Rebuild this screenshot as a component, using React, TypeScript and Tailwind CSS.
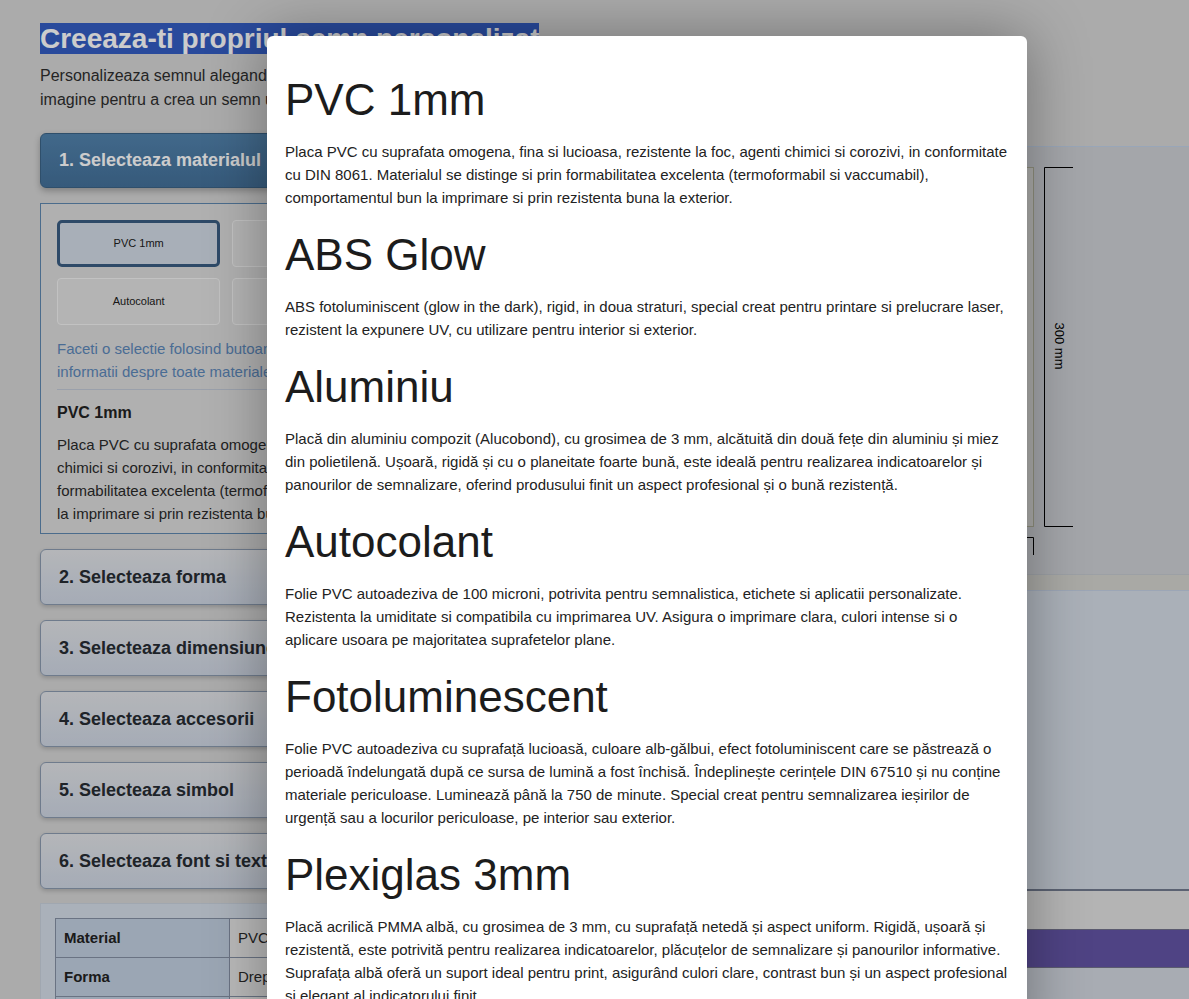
import React from "react";

const materials = [
  {
    t: "PVC 1mm",
    d: "Placa PVC cu suprafata omogena, fina si lucioasa, rezistente la foc, agenti chimici si corozivi, in conformitate cu DIN 8061. Materialul se distinge si prin formabilitatea excelenta (termoformabil si vaccumabil), comportamentul bun la imprimare si prin rezistenta buna la exterior.",
  },
  {
    t: "ABS Glow",
    d: "ABS fotoluminiscent (glow in the dark), rigid, in doua straturi, special creat pentru printare si prelucrare laser, rezistent la expunere UV, cu utilizare pentru interior si exterior.",
  },
  {
    t: "Aluminiu",
    d: "Placă din aluminiu compozit (Alucobond), cu grosimea de 3 mm, alcătuită din două fețe din aluminiu și miez din polietilenă. Ușoară, rigidă și cu o planeitate foarte bună, este ideală pentru realizarea indicatoarelor și panourilor de semnalizare, oferind produsului finit un aspect profesional și o bună rezistență.",
  },
  {
    t: "Autocolant",
    d: "Folie PVC autoadeziva de 100 microni, potrivita pentru semnalistica, etichete si aplicatii personalizate. Rezistenta la umiditate si compatibila cu imprimarea UV. Asigura o imprimare clara, culori intense si o aplicare usoara pe majoritatea suprafetelor plane.",
  },
  {
    t: "Fotoluminescent",
    d: "Folie PVC autoadeziva cu suprafață lucioasă, culoare alb-gălbui, efect fotoluminiscent care se păstrează o perioadă îndelungată după ce sursa de lumină a fost închisă. Îndeplinește cerințele DIN 67510 și nu conține materiale periculoase. Luminează până la 750 de minute. Special creat pentru semnalizarea ieșirilor de urgență sau a locurilor periculoase, pe interior sau exterior.",
  },
  {
    t: "Plexiglas 3mm",
    d: "Placă acrilică PMMA albă, cu grosimea de 3 mm, cu suprafață netedă și aspect uniform. Rigidă, ușoară și rezistentă, este potrivită pentru realizarea indicatoarelor, plăcuțelor de semnalizare și panourilor informative. Suprafața albă oferă un suport ideal pentru print, asigurând culori clare, contrast bun și un aspect profesional și elegant al indicatorului finit.",
  },
];

function StepHeader({ label }: { label: string }) {
  return (
    <div className="mt-[15px] h-[56px] flex items-center px-[18px] rounded-[6px] border border-[#8b9ab0] bg-linear-to-b from-[#e2e4e8] to-[#cfd7e4] shadow-[0_2px_4px_rgba(0,0,0,0.18)] text-[18px] font-bold text-[#272c33]">
      {label}
    </div>
  );
}

export default function App() {
  return (
    <div className="relative w-full h-[999px] overflow-hidden bg-[#d6d6d6] font-['Liberation_Sans',Arial,sans-serif] text-[#2e2e2e]">
      <div className="pl-[40px] pt-[22px]">
        <h1 className="text-[28px] leading-[34px] font-bold">
          <span className="bg-[#345dc3] text-white">Creeaza-ti propriul semn personalizat</span>
        </h1>
        <p className="mt-[8px] text-[16px] leading-[24px]">
          Personalizeaza semnul alegand materialul, forma, dimensiunile si textul dorit sau incarcati o
          <br />
          imagine pentru a crea un semn unic.
        </p>

        <div className="mt-[21px] flex">
          {/* left column */}
          <div className="w-[548px] shrink-0 flex flex-col">
            <div className="h-[55px] flex items-center px-[18px] rounded-[6px] border border-[#3b6386] bg-linear-to-b from-[#5283ad] to-[#44719a] shadow-[0_3px_6px_rgba(0,0,0,0.25)] text-[18px] font-bold text-white">
              1. Selecteaza materialul
            </div>
            <div className="mt-[15px] border border-[#5e87af] bg-[#dcdcdc] px-[16px] pt-[16px] pb-[8px]">
              <div className="grid grid-cols-3 gap-x-[12px] gap-y-[11px]">
                {materials.map((m, i) => (
                  <div
                    key={m.t}
                    className={
                      i === 0
                        ? "h-[47px] flex items-center justify-center rounded-[5px] border-[3px] border-[#3a5d82] bg-[#d3dbe6] text-[11px] text-[#202020]"
                        : "h-[47px] flex items-center justify-center rounded-[4px] border border-[#f3f3f3] bg-[#e2e2e2] text-[11px] text-[#202020]"
                    }
                  >
                    {m.t}
                  </div>
                ))}
              </div>
              <p className="mt-[13px] text-[15px] leading-[22.5px] text-[#5c88ba]">
                Faceti o selectie folosind butoanele de mai sus. Apasati aici pentru mai multe
                <br />
                informatii despre toate materialele disponibile.
              </p>
              <div className="mt-[6px] border-t border-[#c1c9d6]" />
              <div className="mt-[11px] text-[16px] leading-[24px] font-bold text-[#222]">PVC 1mm</div>
              <p className="mt-[8px] text-[15px] leading-[23px] text-[#2a2a2a]">{materials[0].d}</p>
            </div>

            <StepHeader label="2. Selecteaza forma" />
            <StepHeader label="3. Selecteaza dimensiunea" />
            <StepHeader label="4. Selecteaza accesorii" />
            <StepHeader label="5. Selecteaza simbol" />
            <StepHeader label="6. Selecteaza font si text" />

            <div className="mt-[14px] border border-[#c9d1dc] bg-[#d5dee9] p-[14px]">
              <table className="w-full border-collapse text-[15px]">
                <tbody>
                  {[
                    ["Material", "PVC 1mm"],
                    ["Forma", "Dreptunghi"],
                    ["Dimensiuni", "400 x 300 mm"],
                  ].map(([k, v]) => (
                    <tr key={k} className="h-[39px]">
                      <td className="w-[174px] border border-[#8590a4] bg-[#c2d0e1] px-[8px] font-bold text-[#222]">{k}</td>
                      <td className="border border-[#8590a4] bg-[#e8e8e8] px-[8px] text-[#2a2a2a]">{v}</td>
                    </tr>
                  ))}
                </tbody>
              </table>
            </div>
          </div>

          {/* right column */}
          <div className="flex-1 ml-[20px] pt-[13px] flex flex-col">
            <div className="h-[429px] border-t border-b border-t-[#c0d0e6] border-b-[#c4c8cf] bg-[#cdd0d5]">
              <svg width="581" height="427" className="block">
                <rect x="65.5" y="20.5" width="360" height="359" fill="#d9d9d6" stroke="#b2b29b" strokeWidth="1" />
                <path d="M465 20.5 H436.5 V379.5 H465" fill="none" stroke="#000" strokeWidth="1" />
                <text
                  x="451"
                  y="199"
                  fontSize="13"
                  fontFamily="Liberation Sans, Arial, sans-serif"
                  textAnchor="middle"
                  dominantBaseline="central"
                  transform="rotate(90 451 199)"
                  fill="#000"
                >
                  300 mm
                </text>
                <path d="M65.5 408 V390.5 H425.5 V408" fill="none" stroke="#000" strokeWidth="1" />
                <text x="245" y="412" fontSize="13" fontFamily="Liberation Sans, Arial, sans-serif" textAnchor="middle" fill="#000">
                  400 mm
                </text>
              </svg>
            </div>
            <div className="h-[15px] bg-[#d4d4cf]" />
            <div className="h-[301px] border-t border-t-[#c4d0e4] border-b-2 border-b-[#727b8f] bg-[#d5dce7]" />
            <div className="h-[38px] bg-[#e1e1e1]" />
            <div className="h-[39px] border-y border-[#72728b] bg-[#6354a6]" />
            <div className="h-[60px] bg-[#d3d8e0]" />
          </div>
        </div>
      </div>

      {/* backdrop */}
      <div className="absolute inset-0 bg-black/20" />

      {/* modal */}
      <div className="absolute left-[267px] top-[36px] w-[760px] rounded-[6px] bg-white pt-[38px] pl-[18px] pr-[16px] pb-[30px] shadow-[0_0_60px_rgba(0,0,0,0.35)] text-[#222]">
        {materials.map((m) => (
          <div key={m.t}>
            <h2 className="text-[44px] leading-[52px] font-normal text-[#1c1c1c] mb-[14px]">{m.t}</h2>
            <p className="text-[15px] leading-[23px] mb-[20px]">{m.d}</p>
          </div>
        ))}
      </div>
    </div>
  );
}
